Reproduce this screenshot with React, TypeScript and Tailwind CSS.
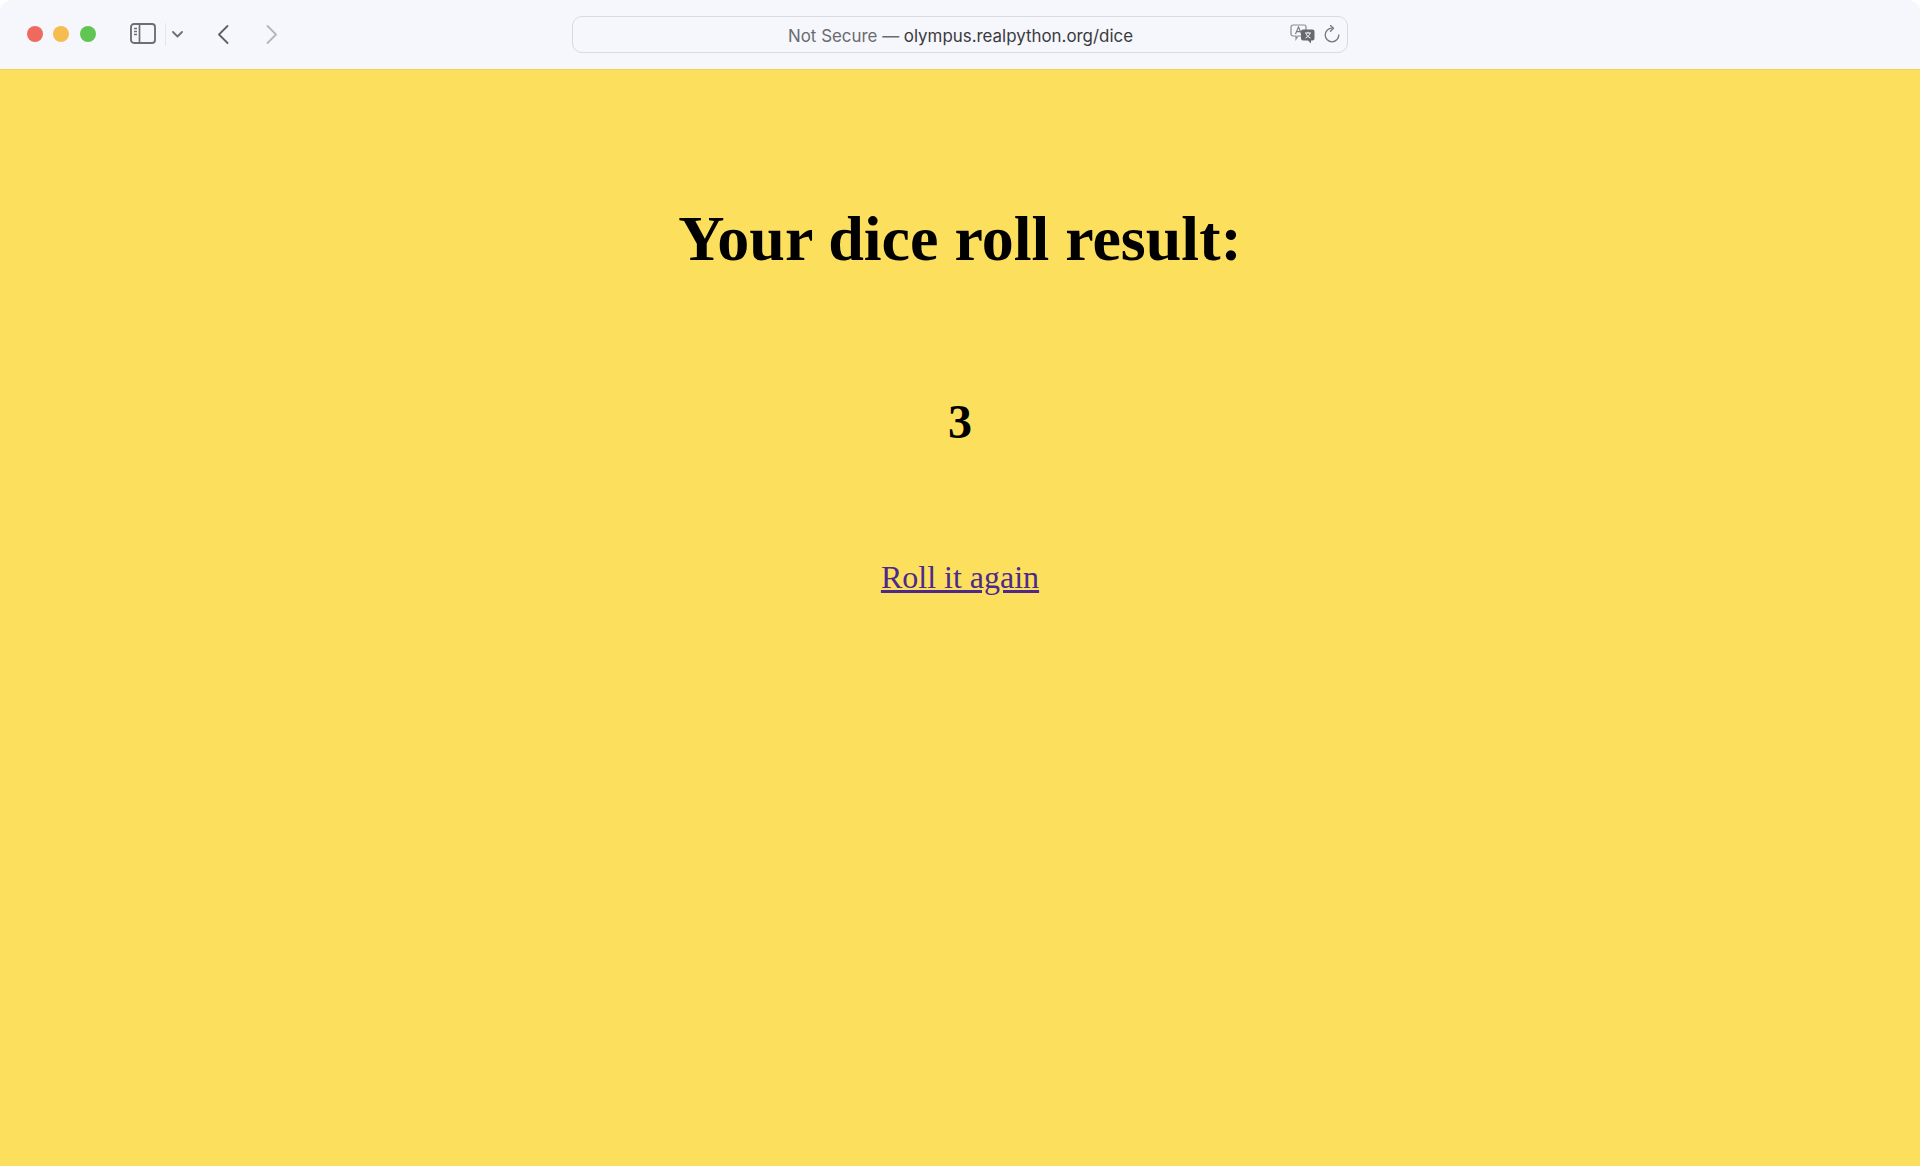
function SidebarIcon() {
  return (
    <svg width="26" height="22" viewBox="0 0 26 22" fill="none">
      <rect x="1" y="1" width="24" height="19" rx="3" stroke="#6e6e73" strokeWidth="1.9" />
      <path d="M9.500 1v19" stroke="#6e6e73" strokeWidth="1.7" />
      <path d="M4 5.500h3M4 8.500h3M4 11.500h3" stroke="#6e6e73" strokeWidth="1.6" />
    </svg>
  );
}

function Chevron({ dir, color, w = 12, h = 19 }: { dir: "left" | "right" | "down"; color: string; w?: number; h?: number }) {
  const d = dir === "left" ? "M10.500 1 2 9.500l8.500 8.500" : dir === "right" ? "M1.500 1 10 9.500 1.500 18" : "M1 1l4.500 4.500L10 1";
  return (
    <svg width={w} height={h} viewBox={`0 0 ${w} ${h}`} fill="none">
      <path d={d} stroke={color} strokeWidth="1.8" strokeLinecap="round" strokeLinejoin="round" />
    </svg>
  );
}

function TranslateIcon() {
  return (
    <svg width="25" height="20" viewBox="0 0 25 20" fill="none">
      <path d="M3 1h11a2 2 0 0 1 2 2v7a2 2 0 0 1-2 2H8l-2 3v-3H3a2 2 0 0 1-2-2V3a2 2 0 0 1 2-2Z" fill="#f6f7fc" stroke="#8a8a8e" strokeWidth="1.2" />
      <path d="M5.500 10 8.500 3l3 7M6.600 7.600h3.800" stroke="#77777b" strokeWidth="1.100" />
      <path d="M13 5.500h9.500a2 2 0 0 1 2 2v7a2 2 0 0 1-2 2H21v3l-3-3h-5a2 2 0 0 1-2-2v-7a2 2 0 0 1 2-2Z" fill="#68686c" />
      <path d="M15 9h6M18 7.800V9M20 9c-.5 2.500-2.500 4-4.500 5M16 9.500c.6 2 2.500 3.800 4.500 4.500" stroke="#f6f7fc" strokeWidth="1" />
    </svg>
  );
}

function ReloadIcon() {
  return (
    <svg width="16" height="18" viewBox="0 0 16 18" fill="none">
      <path d="M14.800 10a6.800 6.800 0 1 1-6.800-6.800" stroke="#77777b" strokeWidth="1.300" strokeLinecap="round" />
      <path d="M6.500 0.500 9.500 3.200 6.500 6.200" stroke="#77777b" strokeWidth="1.300" strokeLinecap="round" strokeLinejoin="round" />
    </svg>
  );
}

export default function App() {
  return (
    <div className="h-[1166px] bg-white overflow-hidden rounded-t-[12px] flex flex-col">
      {/* Toolbar */}
      <header className="h-[70px] shrink-0 bg-[#f6f7fc] border-b border-[#ecd35a] flex items-center pb-[1px]">
        <div className="w-[572px] shrink-0 flex items-center">
          <div className="flex items-center gap-[10px] ml-[27px]">
            <span className="w-[16px] h-[16px] rounded-full bg-[#ee6a5f]" />
            <span className="w-[16px] h-[16px] rounded-full bg-[#f5bd4f]" />
            <span className="w-[16px] h-[16px] rounded-full bg-[#61c554] ml-[1px]" />
          </div>
          <div className="ml-[34px] flex items-center">
            <SidebarIcon />
          </div>
          <div className="ml-[9px] w-[1px] h-[23px] bg-[#e6e6ea]" />
          <div className="ml-[6px] flex items-center">
            <Chevron dir="down" color="#6e6e73" w={11} h={7} />
          </div>
          <div className="ml-[34px] flex items-center">
            <Chevron dir="left" color="#5f5f63" />
          </div>
          <div className="ml-[37px] flex items-center">
            <Chevron dir="right" color="#b5b5ba" />
          </div>
        </div>
        <div className="relative w-[776px] h-[37px] rounded-[10px] border border-[#d9dae0] flex items-center justify-center font-['Inter',sans-serif] text-[16.9px] text-[#6b6b70]">
          <span className="pt-[5px] pl-[1px]">
            Not Secure — <span className="text-[#3a3a3d]">olympus.realpython.org/dice</span>
          </span>
          <div className="absolute right-[7px] top-[7px] flex items-center gap-[9px]">
            <TranslateIcon />
            <ReloadIcon />
          </div>
        </div>
      </header>

      {/* Page */}
      <main className="flex-1 bg-[#fce05d] flex flex-col items-center font-['Liberation_Serif',serif] text-black">
        <h1 className="mt-[132px] text-[64px] leading-[74px] font-bold">Your dice roll result:</h1>
        <h2 className="mt-[118px] text-[48px] leading-[55px] font-bold">3</h2>
        <a href="#" className="mt-[110px] text-[32px] leading-[37px] text-[#4b2a8c] underline">
          Roll it again
        </a>
      </main>
    </div>
  );
}
